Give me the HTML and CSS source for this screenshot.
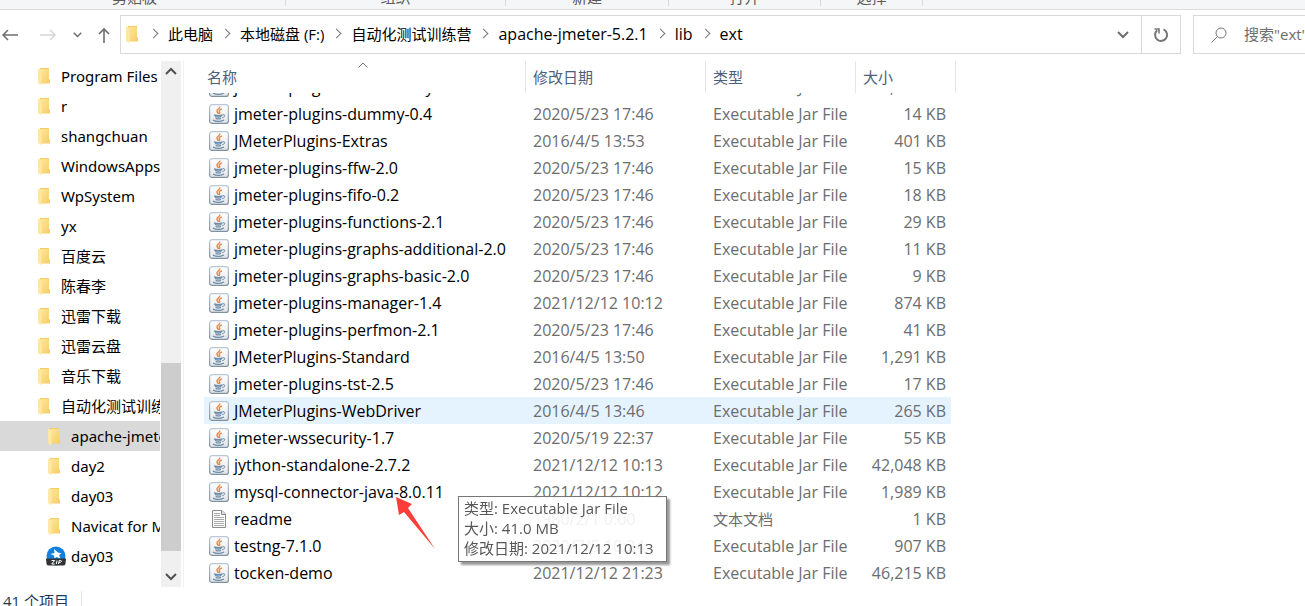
FILE: index.html
```html
<!DOCTYPE html>
<html lang="zh-CN">

<head>
    <meta charset="UTF-8">
    <title>ext</title>
    <link rel="stylesheet" href="styles.css">
</head>

<body>
    <svg class="sprite" aria-hidden="true">
        <defs>
            <linearGradient id="jar-bg" x1="0" y1="0" x2="0" y2="1">
                <stop offset="0" stop-color="#ffffff" />
                <stop offset="1" stop-color="#e2e5e8" />
            </linearGradient>
            <linearGradient id="jar-border" x1="0" y1="0" x2="0" y2="1">
                <stop offset="0" stop-color="#b9c8d5" />
                <stop offset="1" stop-color="#7f909f" />
            </linearGradient>
            <linearGradient id="folder-front" x1="0" y1="0" x2="1" y2="1">
                <stop offset="0" stop-color="#ffe69a" />
                <stop offset="1" stop-color="#f5cd66" />
            </linearGradient>
        </defs>
        <symbol id="folder" viewBox="0 0 12 17">
            <path d="M2 0h9v11l1 1v3.500H2z" fill="#f4cd67" />
            <path d="M3 1h8v10.500l1 .5v3H3z" fill="url(#folder-front)" />
            <path d="M0 .5l3.500 1.500v14.500l-1 .5L0 15z" fill="#ffe8a6" />
        </symbol>
        <symbol id="jar" viewBox="0 0 20 20">
            <rect x=".6" y=".6" width="18.800" height="18.800" rx="2.500" fill="url(#jar-bg)" stroke="url(#jar-border)" stroke-width="1.200" />
            <path d="M10.800 2.500c.8 2.100-3.800 3-2.800 5 .3.900 1.200 1.400 1.400 2.500M12.800 5c-2 .7-3.200 1.500-2.400 2.700.8 1 .3 1.700-.3 2.300" fill="none" stroke="#ee8540" stroke-width="1.400" />
            <path d="M5 10.800c2.500 1 6 1 8.500 0M6 12.500c2 .8 4.600.8 6.500 0M6.600 14.400c1.700.7 3.700.7 5.300 0M4 16.200c3 1.400 8 1.300 11-.2" fill="none" stroke="#6c8ca8" stroke-width="1.300" />
            <path d="M13.600 10.800c3-.8 3 2.200-.4 2.900" fill="none" stroke="#6c8ca8" />
        </symbol>
        <symbol id="text-file" viewBox="0 0 20 20">
            <path d="M3.500 1.500h9.500l3.500 3.500v13.500h-13z" fill="#fcfcfc" stroke="#8c8c8c" />
            <path d="M12.500 1.500v4h4" fill="#ddd" stroke="#8c8c8c" />
            <path d="M5 4.500h6M5 6.500h6M5 8.500h10M5 10.500h10M5 12.500h10M5 14.500h10M5 16.500h10" stroke="#aaa" />
        </symbol>
        <symbol id="zip" viewBox="0 0 20 20">
            <circle cx="10" cy="10" r="9.500" fill="#1480dc" />
            <path d="M8 3l4 3.500 3.500 1-2.500 1.500 1.500 3.500-4-1.500-2 1.500-.5-3-3.500-1.500 4-1z" fill="#fff" />
            <path d="M0 12.500h20l-.5 5.500q-.5 1.500-2.500 1.500h-14q-2 0-2.500-1.500z" fill="#333" />
            <path d="M5.500 14.500h3.200l-3 3.500h3M11 14.500l-.7 3.500M12.500 18l.7-3.500h1.600q1 .2.600 1.100t-2.400.8" fill="none" stroke="#fff" />
        </symbol>
        <symbol id="down" viewBox="0 0 12 8">
            <path d="M1 1l5 5 5-5" fill="none" stroke="currentColor" stroke-width="2" />
        </symbol>
        <symbol id="up" viewBox="0 0 12 8">
            <path d="M1 7l5-5 5 5" fill="none" stroke="currentColor" stroke-width="2" />
        </symbol>
    </svg>

    <div class="ribbon">
        <div class="group clipboard">剪贴板</div>
        <div class="group organize">组织</div>
        <div class="group new">新建</div>
        <div class="group open">打开</div>
        <div class="group select">选择</div>
    </div>

    <div class="toolbar">
        <div class="nav">
            <button type="button" aria-label="后退"><svg width="16" height="12" viewBox="0 0 16 12"><path d="M16 6H1M6 1L1 6l5 5" fill="none" stroke="#6e6e6e" stroke-width="1.500" /></svg></button>
            <button type="button" aria-label="前进" disabled><svg width="16" height="12" viewBox="0 0 16 12"><path d="M0 6h15M10 1l5 5-5 5" fill="none" stroke="#d5d5d5" stroke-width="1.500" /></svg></button>
            <button type="button" aria-label="最近"><svg width="9" height="6"><use href="#down" /></svg></button>
            <button type="button" aria-label="上移"><svg width="12" height="16" viewBox="0 0 12 16"><path d="M6 16V2M1 7l5-5 5 5" fill="none" stroke="#6e6e6e" stroke-width="1.600" /></svg></button>
        </div>
        <div class="address">
            <svg width="12" height="17"><use href="#folder" /></svg>
            <ol class="crumbs">
                <li><a href="#" class="zh">此电脑</a></li>
                <li><a href="#" class="zh">本地磁盘 (F:)</a></li>
                <li><a href="#" class="zh">自动化测试训练营</a></li>
                <li><a href="#">apache-jmeter-5.2.1</a></li>
                <li><a href="#">lib</a></li>
                <li><a href="#">ext</a></li>
            </ol>
            <button type="button" class="history" aria-label="以前的位置"><svg width="12" height="8"><use href="#down" /></svg></button>
            <button type="button" class="refresh" aria-label="刷新"><svg width="16" height="16" viewBox="0 0 16 16"><path d="M10.500 2.400A6 6 0 1 1 4.200 3.300" fill="none" stroke="#777" stroke-width="2" /><path d="M1.500 2h4.500v4.500" fill="none" stroke="#777" stroke-width="1.600" /></svg></button>
        </div>
        <div class="search">
            <svg width="16" height="16" viewBox="0 0 16 16"><circle cx="10" cy="6" r="5" fill="none" stroke="#777" /><path d="M6.300 9.700L.5 15.500" stroke="#777" /></svg>
            <input type="text" aria-label="搜索" placeholder='搜索"ext"'>
        </div>
    </div>

    <div class="content">
        <div class="sidebar">
            <ul class="tree">
                <li><svg><use href="#folder" /></svg>Program Files</li>
                <li><svg><use href="#folder" /></svg>r</li>
                <li><svg><use href="#folder" /></svg>shangchuan</li>
                <li><svg><use href="#folder" /></svg>WindowsApps</li>
                <li><svg><use href="#folder" /></svg>WpSystem</li>
                <li><svg><use href="#folder" /></svg>yx</li>
                <li><svg><use href="#folder" /></svg>百度云</li>
                <li><svg><use href="#folder" /></svg>陈春李</li>
                <li><svg><use href="#folder" /></svg>迅雷下载</li>
                <li><svg><use href="#folder" /></svg>迅雷云盘</li>
                <li><svg><use href="#folder" /></svg>音乐下载</li>
                <li><svg><use href="#folder" /></svg>自动化测试训练营</li>
                <li class="nested selected"><svg><use href="#folder" /></svg>apache-jmeter-5.2.1</li>
                <li class="nested"><svg><use href="#folder" /></svg>day2</li>
                <li class="nested"><svg><use href="#folder" /></svg>day03</li>
                <li class="nested"><svg><use href="#folder" /></svg>Navicat for MySQL</li>
                <li class="nested archive"><svg><use href="#zip" /></svg>day03</li>
            </ul>
            <div class="scrollbar">
                <button type="button" aria-label="向上滚动"><svg width="12" height="8"><use href="#up" /></svg></button>
                <div class="track">
                    <div class="thumb"></div>
                </div>
                <button type="button" aria-label="向下滚动"><svg width="12" height="8"><use href="#down" /></svg></button>
            </div>
        </div>

        <div class="files" id="files">
            <table>
                <thead>
                    <tr>
                        <th class="name">名称<svg class="sort" width="10" height="6" viewBox="0 0 10 6"><path d="M.5 5.500L5 1l4.500 4.500" fill="none" stroke="#777" /></svg></th>
                        <th class="date">修改日期</th>
                        <th class="type">类型</th>
                        <th class="size">大小</th>
                    </tr>
                </thead>
                <tbody>
                    <tr><td><svg><use href="#jar" /></svg>jmeter-plugins-cmd-survey</td><td>2021/12/12 10:12</td><td>Executable Jar File</td><td>1,024 KB</td></tr>
                    <tr><td><svg><use href="#jar" /></svg>jmeter-plugins-dummy-0.4</td><td>2020/5/23 17:46</td><td>Executable Jar File</td><td>14 KB</td></tr>
                    <tr><td><svg><use href="#jar" /></svg>JMeterPlugins-Extras</td><td>2016/4/5 13:53</td><td>Executable Jar File</td><td>401 KB</td></tr>
                    <tr><td><svg><use href="#jar" /></svg>jmeter-plugins-ffw-2.0</td><td>2020/5/23 17:46</td><td>Executable Jar File</td><td>15 KB</td></tr>
                    <tr><td><svg><use href="#jar" /></svg>jmeter-plugins-fifo-0.2</td><td>2020/5/23 17:46</td><td>Executable Jar File</td><td>18 KB</td></tr>
                    <tr><td><svg><use href="#jar" /></svg>jmeter-plugins-functions-2.1</td><td>2020/5/23 17:46</td><td>Executable Jar File</td><td>29 KB</td></tr>
                    <tr><td><svg><use href="#jar" /></svg>jmeter-plugins-graphs-additional-2.0</td><td>2020/5/23 17:46</td><td>Executable Jar File</td><td>11 KB</td></tr>
                    <tr><td><svg><use href="#jar" /></svg>jmeter-plugins-graphs-basic-2.0</td><td>2020/5/23 17:46</td><td>Executable Jar File</td><td>9 KB</td></tr>
                    <tr><td><svg><use href="#jar" /></svg>jmeter-plugins-manager-1.4</td><td>2021/12/12 10:12</td><td>Executable Jar File</td><td>874 KB</td></tr>
                    <tr><td><svg><use href="#jar" /></svg>jmeter-plugins-perfmon-2.1</td><td>2020/5/23 17:46</td><td>Executable Jar File</td><td>41 KB</td></tr>
                    <tr><td><svg><use href="#jar" /></svg>JMeterPlugins-Standard</td><td>2016/4/5 13:50</td><td>Executable Jar File</td><td>1,291 KB</td></tr>
                    <tr><td><svg><use href="#jar" /></svg>jmeter-plugins-tst-2.5</td><td>2020/5/23 17:46</td><td>Executable Jar File</td><td>17 KB</td></tr>
                    <tr class="hover"><td><svg><use href="#jar" /></svg>JMeterPlugins-WebDriver</td><td>2016/4/5 13:46</td><td>Executable Jar File</td><td>265 KB</td></tr>
                    <tr><td><svg><use href="#jar" /></svg>jmeter-wssecurity-1.7</td><td>2020/5/19 22:37</td><td>Executable Jar File</td><td>55 KB</td></tr>
                    <tr><td><svg><use href="#jar" /></svg>jython-standalone-2.7.2</td><td>2021/12/12 10:13</td><td>Executable Jar File</td><td>42,048 KB</td></tr>
                    <tr><td><svg><use href="#jar" /></svg>mysql-connector-java-8.0.11</td><td>2021/12/12 10:12</td><td>Executable Jar File</td><td>1,989 KB</td></tr>
                    <tr><td><svg><use href="#text-file" /></svg>readme</td><td>1980/2/1 0:00</td><td class="zh">文本文档</td><td>1 KB</td></tr>
                    <tr><td><svg><use href="#jar" /></svg>testng-7.1.0</td><td>2020/7/5 10:24</td><td>Executable Jar File</td><td>907 KB</td></tr>
                    <tr><td><svg><use href="#jar" /></svg>tocken-demo</td><td>2021/12/12 21:23</td><td>Executable Jar File</td><td>46,215 KB</td></tr>
                </tbody>
            </table>
        </div>

        <svg class="arrow" width="40" height="52" viewBox="0 0 40 52"><path d="M0 0l16 7-4 4 27 41L8 15l-5 3z" fill="#fc3d39" /></svg>
        <div class="tooltip" role="tooltip">
            <div>类型: Executable Jar File</div>
            <div>大小: 41.0 MB</div>
            <div>修改日期: 2021/12/12 10:13</div>
        </div>
    </div>

    <div class="status"><span>41 个项目</span></div>

    <script>
        // the list is scrolled down to its last row
        const files = document.getElementById("files");
        files.scrollTop = files.scrollHeight;
    </script>
</body>

</html>
```
FILE: styles.css
```css
* {
    box-sizing: border-box;
}

body {
    display: flex;
    flex-direction: column;
    height: 100vh;
    margin: 0;
    overflow: hidden;
    font-family: "Open Sans", "Noto Sans CJK SC", sans-serif;
    font-size: 15px;
    line-height: 20px;
    color: #000;
    background-color: #fff;
}

button {
    display: flex;
    align-items: center;
    justify-content: center;
    padding: 0;
    border: none;
    background: none;
    color: #6e6e6e;
}

svg {
    flex-shrink: 0;
}

ul,
ol {
    list-style: none;
    margin: 0;
    padding: 0;
}

.sprite {
    position: absolute;
    width: 0;
    height: 0;
}

.ribbon {
    display: flex;
    align-items: flex-end;
    flex-shrink: 0;
    height: 10px;
    overflow: hidden;
    background-color: #f5f6f7;
    border-bottom: 1px solid #dadbdc;
}

.group {
    border-right: 1px solid #dadbdc;
    margin-bottom: 3px;
    line-height: 18px;
    text-align: center;
    color: #5a5a5a;
}

.clipboard {
    width: 286px;
    padding-right: 16px;
}

.organize {
    width: 220px;
}

.new {
    width: 163px;
}

.open {
    width: 152px;
}

.select {
    width: 102px;
}

.toolbar {
    display: flex;
    flex-shrink: 0;
    height: 39px;
    margin: 5px 0 7px;
}

.nav {
    display: flex;
    align-items: center;
    justify-content: space-between;
    width: 120px;
    padding: 0 10px 0 2px;
}

.nav button:first-child {
    margin-right: 6px;
}

.address {
    display: flex;
    align-items: center;
    flex: 1;
    min-width: 0;
    border: 1px solid #d9d9d9;
    padding-left: 5px;
}

.crumbs {
    display: flex;
    flex: 1;
    padding-bottom: 2px;
    font-size: 16px;
    white-space: nowrap;
}

.crumbs li {
    display: flex;
    align-items: center;
}

.crumbs li::before {
    content: "";
    width: 6px;
    height: 6px;
    margin: 0 11px 0 9px;
    border: solid #777;
    border-width: 1px 1px 0 0;
    transform: rotate(45deg);
}

.crumbs li:first-child::before {
    margin-left: 12px;
}

.crumbs a {
    color: #000;
    text-decoration: none;
}

.crumbs .zh,
td.zh {
    font-size: 15px;
}

.history {
    width: 36px;
    align-self: stretch;
}

.refresh {
    width: 39px;
    align-self: stretch;
    border-left: 1px solid #d9d9d9;
}

.search {
    display: flex;
    align-items: center;
    gap: 17px;
    width: 112px;
    margin-left: 12px;
    padding-left: 17px;
    border: 1px solid #d9d9d9;
    border-right: none;
    overflow: hidden;
}

.search input {
    width: 100px;
    flex-shrink: 0;
    padding: 0 0 2px;
    border: none;
    outline: none;
    font: inherit;
}

.search input::placeholder {
    color: #6d6d6d;
}

.content {
    position: relative;
    display: flex;
    flex: 1;
    min-height: 0;
}

.sidebar {
    display: flex;
    width: 184px;
    padding-right: 2px;
    border-right: 1px solid #f0f0f0;
}

.tree {
    width: 160px;
    overflow: hidden;
    font-family: "Noto Sans", "Noto Sans CJK SC", sans-serif;
    white-space: nowrap;
}

.tree li {
    display: flex;
    align-items: center;
    gap: 11px;
    height: 30px;
    padding-left: 38px;
}

.tree svg {
    width: 12px;
    height: 17px;
}

.tree .nested {
    padding-left: 48px;
}

.tree .selected {
    background-color: #d9d9d9;
}

.tree .archive {
    padding-left: 46px;
    gap: 5px;
}

.archive svg {
    width: 20px;
    height: 20px;
}

.scrollbar {
    display: flex;
    flex-direction: column;
    width: 20px;
    margin-left: 1px;
    background-color: #f0f0f0;
}

.scrollbar button {
    height: 20px;
    color: #505050;
}

.track {
    display: flex;
    flex-direction: column;
    justify-content: flex-end;
    flex: 1;
    padding-bottom: 16px;
}

.thumb {
    height: 40%;
    background-color: #cdcdcd;
}

.files {
    flex: 1;
    overflow: hidden;
    padding: 0 0 1px 20px;
}

table {
    width: 752px;
    table-layout: fixed;
    border-collapse: separate;
    border-spacing: 0;
    white-space: nowrap;
}

th {
    position: sticky;
    top: 0;
    height: 32px;
    padding: 0 0 0 7px;
    border-right: 1px solid #e5e5e5;
    background-color: #fff;
    color: #4c607a;
    font-size: 15px;
    font-weight: normal;
    text-align: left;
}

.name {
    width: 322px;
    padding-left: 3px;
}

.date {
    width: 180px;
}

.type {
    width: 150px;
}

.size {
    width: 100px;
}

.sort {
    position: absolute;
    top: 1px;
    left: 154px;
}

td {
    height: 27px;
    padding: 0 0 0 7px;
    color: #6d6d6d;
    font-size: 16px;
}

td:first-child {
    padding-left: 5px;
    color: #000;
}

td:last-child {
    padding-right: 10px;
    text-align: right;
}

td svg {
    width: 20px;
    height: 20px;
    margin-right: 5px;
    vertical-align: top;
}

.hover td {
    background-color: #e5f3ff;
}

.hover td:last-child {
    background: linear-gradient(#e5f3ff, #e5f3ff) no-repeat;
    background-size: calc(100% - 5px) 100%;
}

.tooltip {
    position: absolute;
    left: 458px;
    top: 435px;
    padding: 1px 6px 3px 5px;
    border: 1px solid #767676;
    background-color: rgba(255, 255, 255, 0.9);
    box-shadow: 3px 3px 2px rgba(0, 0, 0, 0.4);
    color: #575757;
    min-width: 209px;
    white-space: nowrap;
}

.arrow {
    position: absolute;
    left: 396px;
    top: 436px;
}

.status {
    flex-shrink: 0;
    height: 19px;
    padding: 4px 0 0 3px;
    overflow: hidden;
    color: #1e395b;
}

.status span {
    display: inline-block;
    padding-right: 12px;
    border-right: 1px solid #e5e5e5;
}
```
